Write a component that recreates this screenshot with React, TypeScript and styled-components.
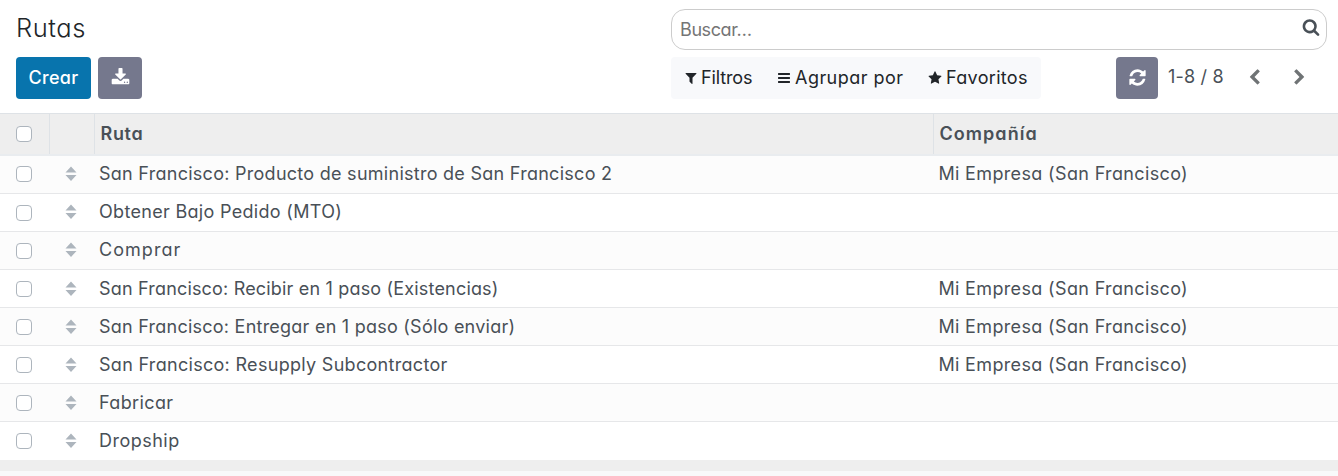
import React from 'react';
import styled, { createGlobalStyle } from 'styled-components';

const GlobalStyle = createGlobalStyle`
  *, *::before, *::after { box-sizing: border-box; }
  body {
    margin: 0;
    background: #f8f9fa;
    color: #495057;
    font-family: Inter, "Open Sans", sans-serif;
    font-size: 18px;
    font-weight: 400;
    font-feature-settings: "cv11" 1;
    line-height: 26px;
  }
  button, input { font: inherit; font-feature-settings: inherit; color: inherit; }
`;

const Text = styled.span<{ $track?: number }>`
  letter-spacing: ${({ $track = 0 }) => $track}px;
  white-space: nowrap;
`;

const ControlPanel = styled.header`
  display: grid;
  grid-template-columns: 655px 1fr;
  grid-template-rows: 40px 42px;
  row-gap: 8px;
  height: 113px;
  padding: 9px 11px 0 16px;
  background: #fff;
`;

const Title = styled.h1`
  margin: 0;
  color: #212529;
  font-size: 25.5px;
  font-weight: 300;
  line-height: 38px;
`;

const SearchBox = styled.label`
  display: flex;
  align-items: center;
  justify-content: space-between;
  height: 41px;
  padding: 0 6px 0 8px;
  border: 1px solid #ccc;
  border-radius: 14px;
  color: #495057;
`;

const SearchInput = styled.input`
  flex: 1;
  min-width: 0;
  padding: 0;
  border: 0;
  outline: 0;
  background: transparent;
  letter-spacing: -0.4px;
  &::placeholder { color: #757575; opacity: 1; }
`;

const SearchIconSlot = styled.span`
  display: flex;
  margin-top: -5px;
`;

const Actions = styled.div`
  display: flex;
  gap: 7px;
`;

const Button = styled.button<{ $width: number; $primary?: boolean }>`
  display: flex;
  align-items: center;
  justify-content: center;
  width: ${({ $width }) => $width}px;
  height: 42px;
  padding: 0 0 ${({ $primary }) => ($primary ? 0 : 2)}px;
  border: 0;
  border-radius: 4px;
  background: ${({ $primary }) => ($primary ? '#0874ad' : '#75788d')};
  color: #fff;
  font-weight: 500;
`;

const Tools = styled.div`
  display: flex;
  justify-content: space-between;
`;

const FilterBar = styled.div`
  display: flex;
  width: 370px;
  height: 42px;
  padding-left: 13px;
  border-radius: 4px;
  background: #f8f9fb;
  color: #212529;
`;

const FilterItem = styled.div<{ $width: number; $gap?: number }>`
  display: flex;
  align-items: center;
  gap: ${({ $gap = 4 }) => $gap}px;
  width: ${({ $width }) => $width}px;
`;

const Pager = styled.div`
  display: flex;
  width: 211px;
`;

const PagerValue = styled.div`
  width: 73.5px;
  padding: 7px 0 0 10px;
`;

const PagerArrow = styled.button`
  display: flex;
  align-items: center;
  justify-content: center;
  width: 45px;
  height: 40px;
  padding: 0;
  border: 0;
  background: transparent;
  color: #6f7375;
`;

const Table = styled.div`
  background: #fff;
`;

const columns = 'grid-template-columns: 49px 45px 839px 1fr;';

const HeadRow = styled.div`
  display: grid;
  ${columns}
  height: 42.6px;
  border-top: 1px solid #dee2e6;
  border-bottom: 2px solid #e9ecef;
  background: #eee;
  font-weight: 600;
`;

const HeadCell = styled.div<{ $divider?: boolean }>`
  display: flex;
  align-items: center;
  padding-left: ${({ $divider }) => ($divider ? 5.5 : 16)}px;
  border-left: ${({ $divider }) => ($divider ? '1px solid #dee2e6' : '0')};
`;

const Row = styled.div`
  display: grid;
  ${columns}
  height: 38.1px;
  border-bottom: 1px solid #e6e7e9;
  background: #fff;
  &:nth-child(even) { background: #fcfcfc; }
  &:last-child { border-bottom-color: transparent; }
`;

const Cell = styled.div<{ $indent: number }>`
  display: flex;
  align-items: center;
  padding-top: 0.2px;
  padding-left: ${({ $indent }) => $indent}px;
`;

const Checkbox = styled.input.attrs({ type: 'checkbox' })`
  appearance: none;
  width: 16px;
  height: 16px;
  margin: 0.4px 0 0;
  border: 1px solid #adb5bd;
  border-radius: 4px;
  background: #fff;
`;

const TableFoot = styled.div`
  height: 10.6px;
  background: #eee;
`;

const paths = {
  download:
    'M1344 1344q0-26-19-45t-45-19-45 19-19 45 19 45 45 19 45-19 19-45zm256 0q0-26-19-45t-45-19-45 19-19 45 19 45 45 19 45-19 19-45zm128-224v320q0 40-28 68t-68 28h-1472q-40 0-68-28t-28-68v-320q0-40 28-68t68-28h465l135 136q58 56 136 56t136-56l136-136h464q40 0 68 28t28 68zm-325-569q17 41-14 70l-448 448q-18 19-45 19t-45-19l-448-448q-31-29-14-70 17-39 59-39h256v-448q0-26 19-45t45-19h256q26 0 45 19t19 45v448h256q42 0 59 39z',
  search:
    'M1216 832q0-185-131.5-316.5t-316.5-131.5-316.5 131.5-131.5 316.5 131.5 316.5 316.5 131.5 316.5-131.5 131.5-316.5zm512 832q0 52-38 90t-90 38q-54 0-90-38l-343-342q-179 124-399 124-143 0-273.5-55.5t-225-150-150-225-55.5-273.5 55.5-273.5 150-225 225-150 273.5-55.5 273.5 55.5 225 150 150 225 55.5 273.5q0 220-124 399l343 343q37 37 37 90z',
  filter:
    'M1595 295q17 41-14 70l-493 493v742q0 42-39 59-13 5-25 5-27 0-45-19l-256-256q-19-19-19-45v-486l-493-493q-31-29-14-70 17-39 59-39h1280q42 0 59 39z',
  bars:
    'M1664 1344v128q0 26-19 45t-45 19h-1408q-26 0-45-19t-19-45v-128q0-26 19-45t45-19h1408q26 0 45 19t19 45zm0-512v128q0 26-19 45t-45 19h-1408q-26 0-45-19t-19-45v-128q0-26 19-45t45-19h1408q26 0 45 19t19 45zm0-512v128q0 26-19 45t-45 19h-1408q-26 0-45-19t-19-45v-128q0-26 19-45t45-19h1408q26 0 45 19t19 45z',
  star:
    'M1728 647q0 22-26 48l-363 354 86 500q1 7 1 20 0 21-10.5 35.5t-30.5 14.5q-19 0-40-12l-449-236-449 236q-22 12-40 12-21 0-31.5-14.5t-10.5-35.5q0-6 2-20l86-500-364-354q-25-27-25-48 0-37 56-46l502-73 225-455q19-41 49-41t49 41l225 455 502 73q56 9 56 46z',
  refresh:
    'M1639 1056q0 5-1 7-64 268-268 434.5t-478 166.5q-146 0-282.5-55t-243.5-157l-129 129q-19 19-45 19t-45-19-19-45v-448q0-26 19-45t45-19h448q26 0 45 19t19 45-19 45l-137 137q71 66 161 102t187 36q134 0 250-65t186-179q11-17 53-117 8-23 30-23h192q13 0 22.5 9.5t9.5 22.5zm25-800v448q0 26-19 45t-45 19h-448q-26 0-45-19t-19-45 19-45l138-138q-148-137-349-137-134 0-250 65t-186 179q-11 17-53 117-8 23-30 23h-199q-13 0-22.5-9.5t-9.5-22.5v-7q65-268 270-434.5t480-166.5q146 0 284 55.5t245 156.5l130-129q19-19 45-19t45 19 19 45z',
  left:
    'M1427 301l-531 531 531 531q19 19 19 45t-19 45l-166 166q-19 19-45 19t-45-19l-742-742q-19-19-19-45t19-45l742-742q19-19 45-19t45 19l166 166q19 19 19 45t-19 45z',
  right:
    'M1363 877l-742 742q-19 19-45 19t-45-19l-166-166q-19-19-19-45t19-45l531-531-531-531q-19-19-19-45t19-45l166-166q19-19 45-19t45 19l742 742q19 19 19 45t-19 45z',
};

const Icon = ({ name, size }: { name: keyof typeof paths; size: number }) => (
  <svg width={size} height={size} viewBox="0 0 1792 1792" fill="currentColor" aria-hidden="true">
    <path d={paths[name]} />
  </svg>
);

const DragHandle = () => (
  <svg width="12" height="16" viewBox="0 0 12 16" fill="#adb5bd" aria-hidden="true">
    <path d="M6 0.5 11.5 6.5H0.5zM0.5 9H11.5L6 15z" />
  </svg>
);

type Label = { text: string; track: number };

const company: Label = { text: 'Mi Empresa (San Francisco)', track: 0.35 };

const routes: { name: Label; company?: Label }[] = [
  { name: { text: 'San Francisco: Producto de suministro de San Francisco 2', track: 0.27 }, company },
  { name: { text: 'Obtener Bajo Pedido (MTO)', track: 0.31 } },
  { name: { text: 'Comprar', track: 1.05 } },
  { name: { text: 'San Francisco: Recibir en 1 paso (Existencias)', track: 0.18 }, company },
  { name: { text: 'San Francisco: Entregar en 1 paso (Sólo enviar)', track: 0.24 }, company },
  { name: { text: 'San Francisco: Resupply Subcontractor', track: 0.3 }, company },
  { name: { text: 'Fabricar', track: 0.38 } },
  { name: { text: 'Dropship', track: 0.48 } },
];

export default function App() {
  return (
    <>
      <GlobalStyle />
      <ControlPanel>
        <Title><Text $track={0.55}>Rutas</Text></Title>
        <SearchBox>
          <SearchInput placeholder="Buscar…" />
          <SearchIconSlot><Icon name="search" size={18} /></SearchIconSlot>
        </SearchBox>
        <Actions>
          <Button $width={75} $primary><Text $track={0.3}>Crear</Text></Button>
          <Button $width={44} aria-label="Exportar"><Icon name="download" size={19} /></Button>
        </Actions>
        <Tools>
          <FilterBar>
            <FilterItem $width={93} $gap={3}><Icon name="filter" size={14} /><Text $track={-0.12}>Filtros</Text></FilterItem>
            <FilterItem $width={151}><Icon name="bars" size={14} /><Text $track={0.46}>Agrupar por</Text></FilterItem>
            <FilterItem $width={100}><Icon name="star" size={14} /><Text $track={0.32}>Favoritos</Text></FilterItem>
          </FilterBar>
          <Pager>
            <Button $width={42} aria-label="Actualizar"><Icon name="refresh" size={19} /></Button>
            <PagerValue><Text $track={0.2}>1-8 / 8</Text></PagerValue>
            <PagerArrow aria-label="Anterior"><Icon name="left" size={17} /></PagerArrow>
            <PagerArrow aria-label="Siguiente"><Icon name="right" size={17} /></PagerArrow>
          </Pager>
        </Tools>
      </ControlPanel>
      <Table>
        <HeadRow>
          <HeadCell><Checkbox /></HeadCell>
          <HeadCell $divider />
          <HeadCell $divider><Text $track={0.65}>Ruta</Text></HeadCell>
          <HeadCell $divider><Text $track={1.05}>Compañía</Text></HeadCell>
        </HeadRow>
        {routes.map((route) => (
          <Row key={route.name.text}>
            <Cell $indent={16}><Checkbox /></Cell>
            <Cell $indent={16}><DragHandle /></Cell>
            <Cell $indent={5}><Text $track={route.name.track}>{route.name.text}</Text></Cell>
            <Cell $indent={5.4}>
              {route.company && <Text $track={route.company.track}>{route.company.text}</Text>}
            </Cell>
          </Row>
        ))}
      </Table>
      <TableFoot />
    </>
  );
}
